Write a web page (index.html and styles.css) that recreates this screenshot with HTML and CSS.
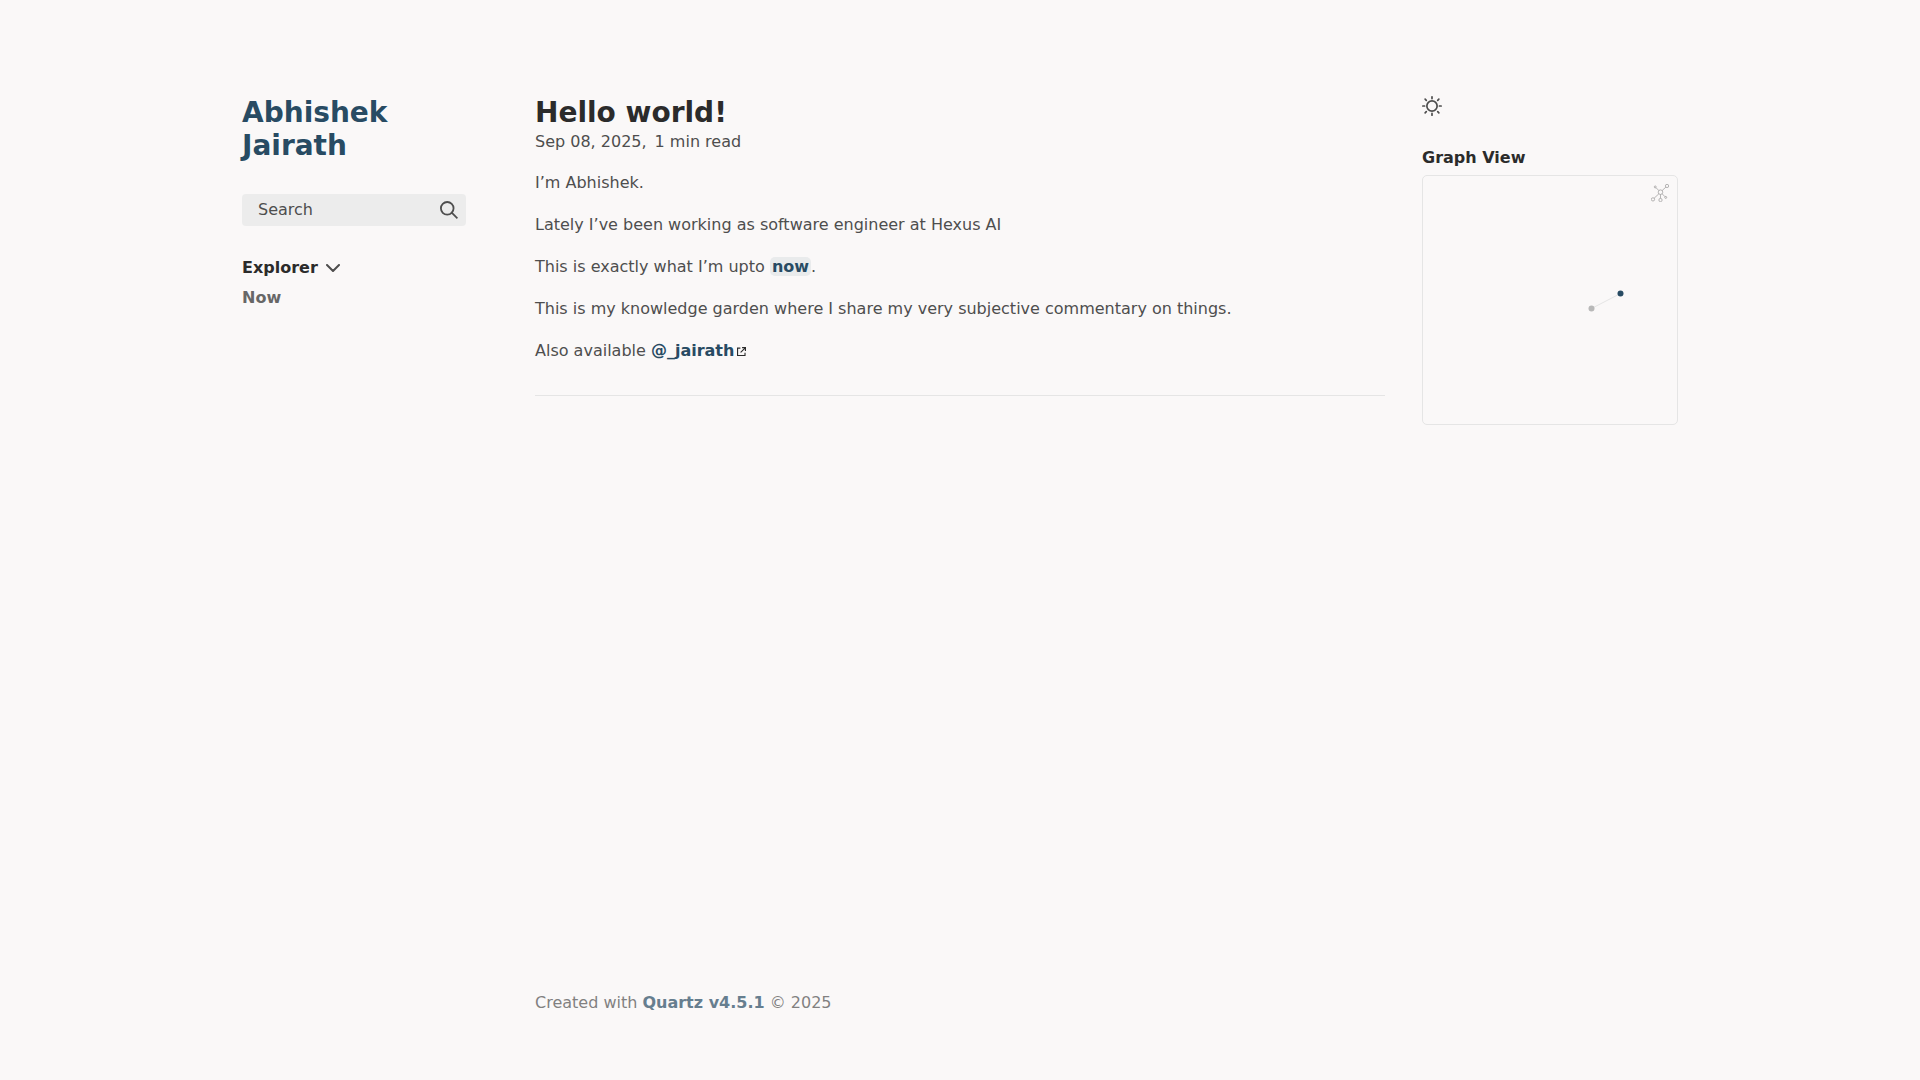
FILE: index.html
```html
<!DOCTYPE html>
<html lang="en">
<head>
<meta charset="utf-8">
<meta name="viewport" content="width=device-width, initial-scale=1">
<title>Hello world!</title>
<link rel="stylesheet" href="styles.css">
</head>
<body>
<div class="page">
  <aside class="sidebar sidebar-left">
    <h2 class="site-title"><a href="#">Abhishek Jairath</a></h2>
    <button class="search" type="button">
      <span>Search</span>
      <svg width="18" height="18" viewBox="0 0 19.900 19.700" fill="none" stroke="currentColor" stroke-width="2" aria-hidden="true"><path stroke-linecap="square" d="M18.500 18.300l-5.400-5.400"/><circle cx="8" cy="8" r="7"/></svg>
    </button>
    <nav class="explorer">
      <button class="explorer-toggle" type="button">
        <span>Explorer</span>
        <svg width="14" height="8" viewBox="5 8 14 8" fill="none" stroke="currentColor" stroke-width="2" stroke-linecap="round" stroke-linejoin="round" aria-hidden="true"><polyline points="6 9 12 15 18 9"/></svg>
      </button>
      <ul class="explorer-list"><li><a href="#now">Now</a></li></ul>
    </nav>
  </aside>

  <main class="center">
    <h1 class="article-title">Hello world!</h1>
    <p class="meta"><time datetime="2025-09-08">Sep 08, 2025,</time><span>1 min read</span></p>
    <article class="article">
      <p>I’m Abhishek.</p>
      <p>Lately I’ve been working as software engineer at Hexus AI</p>
      <p>This is exactly what I’m upto <a class="internal" href="#now">now</a>.</p>
      <p>This is my knowledge garden where I share my very subjective commentary on things.</p>
      <p>Also available <a href="#jairath">@_jairath<svg class="external-icon" viewBox="0 0 512 512" aria-hidden="true"><path d="M320 0H288V64h32 82.7L201.4 265.4 178.7 288 224 333.3l22.6-22.6L448 109.3V192v32h64V192 32 0H480 320zM32 32H0V64 480v32H32 456h32V480 352 320H424v32 96H64V96h96 32V32H160 32z"/></svg></a></p>
    </article>
    <hr class="divider">
  </main>

  <aside class="sidebar sidebar-right">
    <button class="theme-toggle" type="button" aria-label="Toggle dark mode">
      <svg width="20" height="20" viewBox="0 0 35 35" fill="none" stroke="currentColor" stroke-width="3" stroke-linecap="round" aria-hidden="true"><circle cx="17.5" cy="17.5" r="9"/><path d="M1.5 17.5h3M30.500 17.500h3M17.500 1.500v3M17.500 30.500v3M5.500 5.500l2 2M27.500 27.500l2 2M29.500 5.500l-2 2M7.500 27.500l-2 2"/></svg>
    </button>
    <section class="graph">
      <h3 class="graph-title">Graph View</h3>
      <div class="graph-box">
        <svg class="graph-canvas" viewBox="0 0 254 248" role="img" aria-label="Graph of linked pages"><path d="M168.500 132.500L197.500 117.500" stroke="#e5e5e5"/><circle cx="168.500" cy="132.500" r="3" fill="#b8b8b8"/><circle cx="197.500" cy="117.500" r="3" fill="#284b63"/></svg>
        <button class="graph-expand" type="button" aria-label="Global graph">
          <svg width="18" height="18" viewBox="0 0 55 55" fill="none" stroke="currentColor" stroke-width="2" aria-hidden="true"><circle cx="49" cy="6" r="5"/><circle cx="13" cy="9" r="3"/><circle cx="29" cy="25" r="7"/><circle cx="6" cy="47" r="5"/><circle cx="29" cy="49" r="5"/><circle cx="45" cy="41" r="3"/><path d="M45.500 9.500L34 20M15 11l9 9M24 30L9.500 43.500M29 32v12M34 30l9 9"/></svg>
        </button>
      </div>
    </section>
  </aside>

  <footer class="footer"><p>Created with <a href="#quartz">Quartz v4.5.1</a> © 2025</p></footer>
</div>
</body>
</html>
```
FILE: styles.css
```css
:root {
  --light: #faf8f8;
  --lightgray: #e5e5e5;
  --darkgray: #4e4e4e;
  --dark: #2b2b2b;
  --secondary: #284b63;
}

* { box-sizing: border-box; }

body {
  margin: 0;
  background: var(--light);
  color: var(--darkgray);
  font: 16px/26px "DejaVu Sans", sans-serif;
}

h1, h2, h3, p, ul { margin: 0; padding: 0; }

a {
  color: var(--secondary);
  font-weight: 700;
  text-decoration: none;
}

button {
  border: 0;
  padding: 0;
  background: none;
  color: inherit;
  font: inherit;
  cursor: pointer;
}

svg { display: block; }

.page {
  display: grid;
  grid-template: "left center right" 1fr "left footer right" auto / 320px minmax(0, 1fr) 320px;
  column-gap: 5px;
  max-width: 1500px;
  min-height: 100vh;
  margin: 0 auto;
}

.sidebar {
  display: flex;
  flex-direction: column;
  gap: 32px;
  padding: 96px 32px 32px;
}

.sidebar-left { grid-area: left; padding-right: 64px; }
.sidebar-right { grid-area: right; }

.site-title, .article-title {
  font-size: 28px;
  line-height: 33px;
}

.search {
  display: flex;
  align-items: center;
  justify-content: space-between;
  height: 32px;
  padding: 0 8px 0 16px;
  border-radius: 4px;
  background: #ececec;
}

.explorer-toggle {
  display: flex;
  align-items: center;
  gap: 8px;
  height: 20px;
}

.explorer-toggle span { color: var(--dark); font-weight: 700; }

.explorer-list { margin-top: 7px; list-style: none; }
.explorer-list a { color: var(--darkgray); opacity: 0.85; }

.center { grid-area: center; padding-top: 96px; }
.article-title { color: var(--dark); }
.meta { display: flex; gap: 8px; }

.article {
  display: flex;
  flex-direction: column;
  gap: 16px;
  padding-top: 15px;
}

.internal {
  padding: 0 2px;
  border-radius: 5px;
  background: rgba(143, 159, 169, 0.15);
}

.external-icon {
  display: inline-block;
  width: 9px;
  height: 9px;
  margin: 0 3px;
  fill: var(--dark);
}

.divider {
  height: 1px;
  margin: 31px 0;
  border: 0;
  background: var(--lightgray);
}

.theme-toggle { align-self: flex-start; }

.graph-title {
  color: var(--dark);
  font-size: 16px;
  line-height: 19px;
}

.graph-box {
  position: relative;
  height: 250px;
  margin-top: 8px;
  border: 1px solid var(--lightgray);
  border-radius: 5px;
}

.graph-canvas { width: 100%; height: 100%; }

.graph-expand {
  position: absolute;
  top: 8px;
  right: 8px;
  opacity: 0.6;
}

.footer {
  grid-area: footer;
  padding-bottom: 64px;
}

.footer p { opacity: 0.7; }

@media (max-width: 1200px) {
  .page {
    grid-template: "left" auto "center" auto "right" auto "footer" auto / minmax(0, 1fr);
    padding: 0 16px;
  }

  .sidebar, .center { padding: 32px 0 0; }
}
```
